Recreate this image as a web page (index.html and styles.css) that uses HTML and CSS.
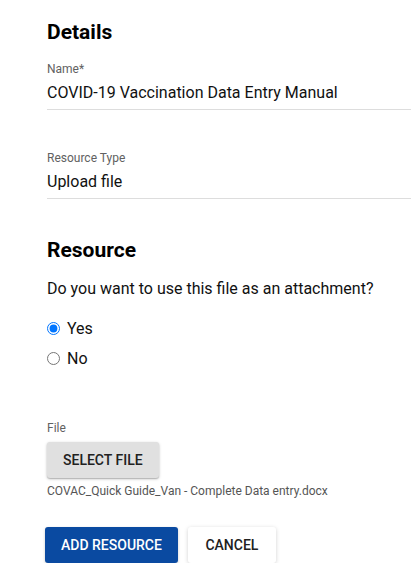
FILE: index.html
```html
<!DOCTYPE html>
<html lang="en">
<head>
<meta charset="utf-8">
<title>Details</title>
<link rel="stylesheet" href="styles.css">
</head>
<body>
<form class="form">
  <h2 class="heading heading-details">Details</h2>
  <div class="field">
    <label class="field-label">Name*</label>
    <div class="field-value">COVID-19 Vaccination Data Entry Manual</div>
  </div>
  <div class="field field-second">
    <label class="field-label">Resource Type</label>
    <div class="field-value">Upload file</div>
  </div>

  <h2 class="heading heading-resource">Resource</h2>
  <p class="question">Do you want to use this file as an attachment?</p>
  <div class="options">
    <label class="option"><input type="radio" name="attach" class="radio" checked> Yes</label>
    <label class="option"><input type="radio" name="attach" class="radio"> No</label>
  </div>

  <div class="file">
    <div class="field-label">File</div>
    <button type="button" class="btn btn-grey">Select file</button>
    <div class="file-name">COVAC_Quick Guide_Van - Complete Data entry.docx</div>
  </div>

  <div class="actions">
    <button type="button" class="btn btn-primary">Add resource</button>
    <button type="button" class="btn btn-white">Cancel</button>
  </div>
</form>
</body>
</html>
```

FILE: styles.css
```css
* { box-sizing: border-box; }

html, body {
  margin: 0;
  padding: 0;
  background: #ffffff;
  overflow: hidden;
}

body {
  font-family: Roboto, "Noto Sans", Arial, sans-serif;
  color: #212121;
}

.form {
  display: flex;
  flex-direction: column;
  padding: 20px 0 0 47px;
}

.heading {
  margin: 0;
  font-size: 21px;
  line-height: 24px;
  font-weight: 700;
  color: #000;
}

.field {
  margin-top: 17px;
  display: flex;
  flex-direction: column;
  padding-bottom: 4px;
  border-bottom: 1px solid #dddddd;
}

.field-second {
  margin-top: 40px;
}

.field-label {
  font-size: 12px;
  line-height: 16px;
  color: #616161;
}

.field-value {
  margin-top: 4px;
  font-size: 16px;
  line-height: 24px;
  color: #111;
}

.heading-resource {
  margin-top: 39px;
}

.question {
  margin: 15px 0 0;
  font-size: 16px;
  line-height: 24px;
  color: #111;
}

.options {
  margin-top: 12px;
  display: flex;
  flex-direction: column;
}

.option {
  display: flex;
  align-items: center;
  gap: 7px;
  height: 30px;
  font-size: 16px;
  color: #111;
}

.radio {
  margin: 0;
  width: 13px;
  height: 13px;
}

.file {
  margin-top: 47px;
  display: flex;
  flex-direction: column;
  align-items: flex-start;
}

.btn {
  font-family: Roboto, "Noto Sans", Arial, sans-serif;
  font-size: 14px;
  font-weight: 500;
  text-transform: uppercase;
  height: 36px;
  min-width: 88px;
  padding: 0 16px;
  border: none;
  border-radius: 3px;
  cursor: pointer;
}

.btn-grey {
  margin-top: 6px;
  background: #e0e0e0;
  color: #212121;
  box-shadow: 0 1px 3px rgba(0,0,0,0.25), 0 1px 1px rgba(0,0,0,0.14);
}

.file-name {
  margin-top: 5px;
  font-size: 12px;
  line-height: 16px;
  color: #555;
}

.actions {
  margin-top: 28px;
  margin-left: -2px;
  display: flex;
  gap: 10px;
}

.btn-primary {
  background: #0a4aa1;
  color: #fff;
  box-shadow: 0 1px 3px rgba(0,0,0,0.2);
}

.btn-white {
  background: #fff;
  color: #212121;
  box-shadow: 0 1px 4px rgba(0,0,0,0.18);
}
```
